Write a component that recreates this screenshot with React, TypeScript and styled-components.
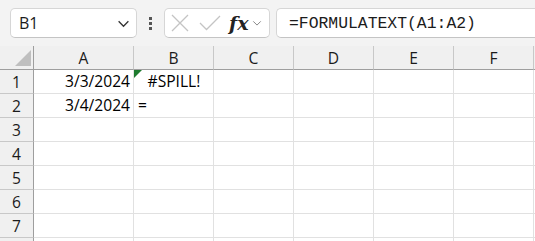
import React from 'react';
import styled, { createGlobalStyle } from 'styled-components';

const GlobalStyle = createGlobalStyle`
  html, body {
    margin: 0;
    padding: 0;
    background: #f3f3f3;
    overflow: hidden;
  }
`;

const Page = styled.div`
  width: 535px;
  height: 241px;
  overflow: hidden;
  background: #f3f3f3;
  font-family: 'Open Sans', 'Liberation Sans', sans-serif;
`;

const Toolbar = styled.div`
  display: flex;
  align-items: center;
  height: 30px;
  padding: 8px 0 8px 10px;
`;

const Box = styled.div`
  box-sizing: border-box;
  height: 30px;
  background: #fff;
  border: 1px solid #d6d6d6;
  border-bottom-color: #c4c4c4;
  border-radius: 5px;
  display: flex;
  align-items: center;
`;

const NameBox = styled(Box)`
  width: 127px;
  padding: 0 6px 0 8px;
  justify-content: space-between;
  font-size: 16px;
  color: #1b1b1b;
`;

const Dots = styled.div`
  width: 27px;
  display: flex;
  flex-direction: column;
  align-items: center;
  gap: 2px;
  & span {
    width: 3px;
    height: 3px;
    background: #555;
  }
`;

const FxBox = styled(Box)`
  width: 106px;
  padding: 0 6px 0 5px;
`;

const FxGlyph = styled.span`
  font-family: 'DejaVu Serif', 'Liberation Serif', serif;
  font-style: italic;
  font-weight: 600;
  font-size: 19px;
  color: #222;
  margin: 0 3px 0 8px;
  line-height: 1;
`;

const FormulaBox = styled(Box)`
  flex: 1;
  margin-left: 6px;
  border-right: none;
  border-radius: 5px 0 0 5px;
  padding-left: 12px;
  font-family: 'Liberation Mono', monospace;
  font-size: 16.4px;
  color: #1b1b1b;
`;

const Grid = styled.div`
  display: grid;
  grid-template-columns: 34px 100px repeat(6, 80px);
  grid-auto-rows: 24px;
`;

const Cell = styled.div<{ $align?: 'left' | 'right' | 'center' }>`
  box-sizing: border-box;
  background: #fff;
  border-right: 1px solid #e1e1e1;
  border-bottom: 1px solid #e1e1e1;
  display: flex;
  align-items: flex-end;
  justify-content: ${p => (p.$align === 'right' ? 'flex-end' : p.$align === 'center' ? 'center' : 'flex-start')};
  padding: 0 3px 2px 4px;
  font-size: 15.6px;
  line-height: 20px;
  color: #000;
  position: relative;
  white-space: nowrap;
`;

const ColHead = styled.div`
  box-sizing: border-box;
  background: #f0f0f0;
  border-right: 1px solid #c8c8c8;
  border-bottom: 1px solid #9e9e9e;
  display: flex;
  align-items: center;
  justify-content: center;
  font-size: 15.6px;
  color: #1b1b1b;
`;

const Corner = styled(ColHead)`
  border-right-color: #9e9e9e;
  position: relative;
  &::after {
    content: '';
    position: absolute;
    right: 2px;
    bottom: 3px;
    width: 0;
    height: 0;
    border-left: 16px solid transparent;
    border-bottom: 16px solid #bfbfbf;
  }
`;

const RowHead = styled.div`
  box-sizing: border-box;
  background: #f0f0f0;
  border-right: 1px solid #9e9e9e;
  border-bottom: 1px solid #c8c8c8;
  display: flex;
  align-items: center;
  justify-content: center;
  font-size: 15.6px;
  color: #1b1b1b;
`;

const ErrorFlag = styled.span`
  position: absolute;
  left: 0;
  top: 0;
  width: 0;
  height: 0;
  border-top: 8px solid #1e7b2f;
  border-right: 8px solid transparent;
`;

const Chevron = ({ size = 12, color = '#333' }: { size?: number; color?: string }) => (
  <svg width={size} height={size} viewBox="0 0 12 12" fill="none">
    <path d="M1.5 4L6 8.5L10.5 4" stroke={color} strokeWidth="1.2" />
  </svg>
);

// G is only a sliver at the right edge, row 8 only a sliver at the bottom
const cols = ['A', 'B', 'C', 'D', 'E', 'F', ''];
const rows = [1, 2, 3, 4, 5, 6, 7, 8];

const data: Record<string, { text: string; align: 'left' | 'right' | 'center'; flag?: boolean }> = {
  A1: { text: '3/3/2024', align: 'right' },
  B1: { text: '#SPILL!', align: 'center', flag: true },
  A2: { text: '3/4/2024', align: 'right' },
  B2: { text: '=', align: 'left' },
};

export default function App() {
  return (
    <Page>
      <GlobalStyle />
      <Toolbar>
        <NameBox>
          <span>B1</span>
          <Chevron size={13} />
        </NameBox>
        <Dots>
          <span />
          <span />
          <span />
        </Dots>
        <FxBox>
          <svg width="20" height="20" viewBox="0 0 20 20">
            <path d="M2 2L18 18M18 2L2 18" stroke="#c4c4c4" strokeWidth="1.3" fill="none" />
          </svg>
          <svg width="22" height="20" viewBox="0 0 22 20" style={{ marginLeft: 9 }}>
            <path d="M1 10L7.5 16.5L21 3" stroke="#c4c4c4" strokeWidth="1.3" fill="none" />
          </svg>
          <FxGlyph>fx</FxGlyph>
          <Chevron size={10} color="#888" />
        </FxBox>
        <FormulaBox>=FORMULATEXT(A1:A2)</FormulaBox>
      </Toolbar>
      <Grid>
        <Corner />
        {cols.map((c, i) => (
          <ColHead key={i}>{c}</ColHead>
        ))}
        {rows.map(r => (
          <React.Fragment key={r}>
            <RowHead>{r < 8 ? r : ''}</RowHead>
            {cols.map((c, i) => {
              const d = data[c + r];
              return (
                <Cell key={i} $align={d?.align}>
                  {d?.flag && <ErrorFlag />}
                  {d?.text}
                </Cell>
              );
            })}
          </React.Fragment>
        ))}
      </Grid>
    </Page>
  );
}
